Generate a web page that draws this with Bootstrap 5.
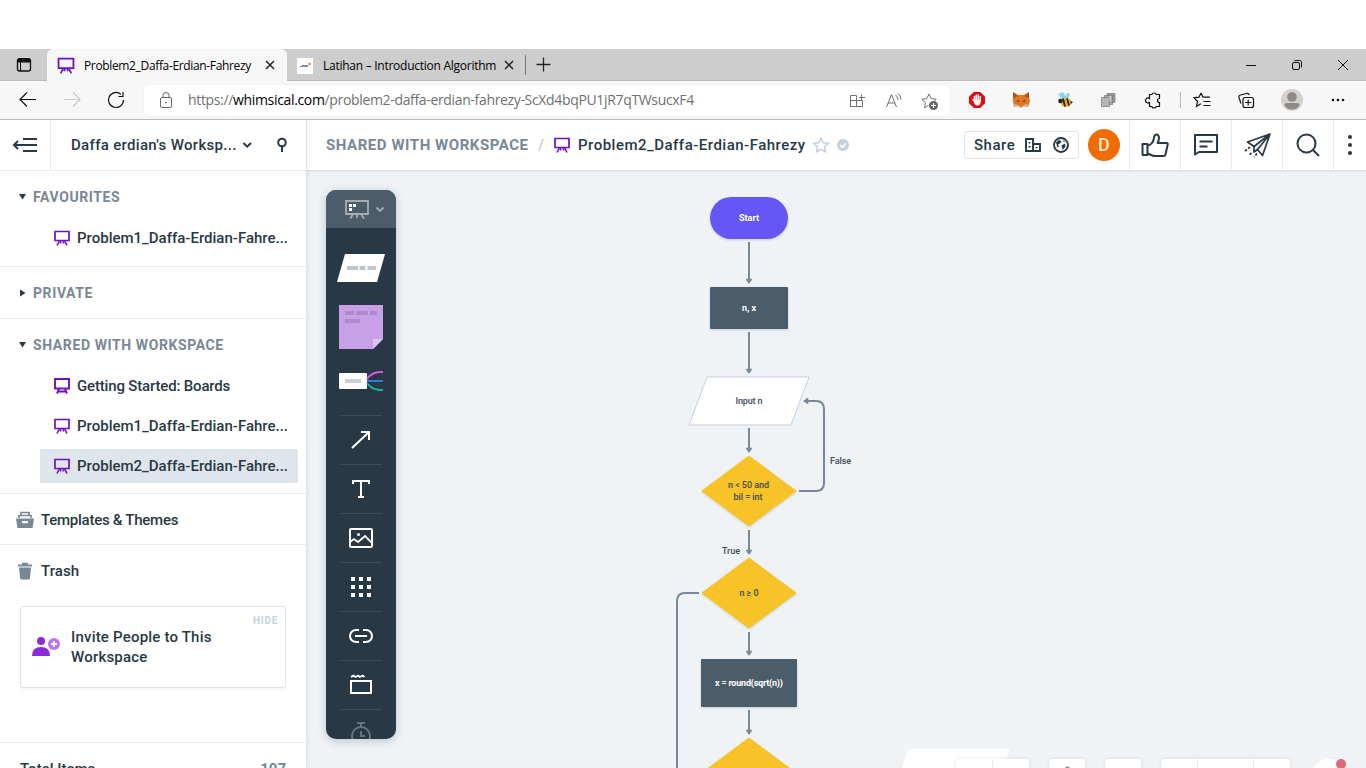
<!DOCTYPE html>
<html lang="en">
<head>
<meta charset="utf-8">
<meta name="viewport" content="width=device-width, initial-scale=1">
<title>Problem2_Daffa-Erdian-Fahrezy</title>
<link href="https://cdn.jsdelivr.net/npm/bootstrap@5.3.0/dist/css/bootstrap.min.css" rel="stylesheet">
<style>
:root{--ink:#283845;--slate:#788896;--line:#e9edf3;--violet:#730fc3;--canvas:#eff3f6}
body{height:100vh;overflow:hidden;background:#fff;color:var(--ink);font-family:Roboto,"Liberation Sans",sans-serif;font-weight:500;font-size:15px;line-height:20px;padding-top:49px}
svg{display:block;flex:none}
.ui{font-family:"Open Sans","Noto Sans",sans-serif;font-weight:400;color:#000;white-space:nowrap}
.tabstrip{height:32px;background:#cdcdcd;border-bottom:1px solid #bcbcbc}
.tab-active{width:240px;height:32px;background:#f7f7f7;border-radius:6px 6px 0 0;padding:0 12px 0 10px}
.tab-title{font-size:12px;line-height:31px}
.tab-first{letter-spacing:-.35px;margin-left:9px}
.tab-second{letter-spacing:-.26px}
.addressbar{height:38px;background:#f7f7f7}
.chrome-end{height:1px;background:#b9b9b9}
.urlbox{width:806px;height:31px;background:#fff;border-radius:5px;margin-left:11px;box-shadow:0 0 2px #00000012}
.url{font-size:14px;color:#707070;letter-spacing:-.34px;width:669px;padding-left:16px}
.sidebar{width:307px;border-right:1px solid #dfe4ea;box-shadow:1px 0 3px #28384514;z-index:1}
.topbar{height:51px;border-bottom:1px solid #dde3ea;background:#fff}
.side-top{height:51px;border-bottom:1px solid var(--line)}
.burger{width:51px;height:50px;border-right:1px solid var(--line)}
.workspace{letter-spacing:.32px}
.group{border-bottom:1px solid var(--line)}
.group-label{height:50px;padding:3px 0 0 18px;font-size:14px;font-weight:700;color:var(--slate);letter-spacing:.6px}
.doc{height:34px;margin:0 8px 6px 40px;padding-left:14px;gap:7px;border-radius:2px;white-space:nowrap}
.doc.current{background:#dfe5ed}
.doc-tight{letter-spacing:-.17px}
.link-row{height:51px;padding:2px 0 0 16px;gap:7px;letter-spacing:-.25px}
.bin-row{letter-spacing:.05px}
.invite{width:266px;height:82px;margin:10px 0 0 20px;border:1px solid #dfe5ed;border-radius:2px;box-shadow:0 2px 3px #2838450d;letter-spacing:.2px}
.hide-link{position:absolute;right:7px;top:4px;font-size:10px;font-weight:700;color:#c5d0db;letter-spacing:.7px}
.totals{margin-top:54px;border-top:1px solid var(--line);padding:16px 20px 0}
.total-num{color:var(--slate);font-weight:700}
.crumb{color:var(--slate);font-weight:700;letter-spacing:.55px;font-size:15px;width:203px;margin-left:19px;white-space:nowrap}
.board-name{letter-spacing:.49px;width:227px;white-space:nowrap}
.share{width:115px;height:28px;border:1px solid #dfe5ed;border-radius:3px;padding:0 4px 0 9px;letter-spacing:.5px}
.avatar{width:32px;height:32px;border-radius:50%;background:#f06c00;color:#ffe6cf;font-size:18px;margin:0 9px}
.cell{width:51px;height:50px;border-left:1px solid var(--line)}
.canvas{background:var(--canvas);overflow:hidden}
.diagram text{font-size:9px;fill:#3f4c58;text-anchor:middle}
.diagram .on-dark{fill:#fff;font-weight:700}
.palette{position:absolute;left:19px;top:19px;width:70px;height:549px;border-radius:10px;background:#283845;box-shadow:0 2px 8px #28384540;overflow:hidden}
.dock{position:absolute;left:649px;top:588px;gap:20px;height:36px}
.dock-box{background:#fff;border-radius:4px;box-shadow:0 0 4px #28384520}
.dock-box span{height:36px;border-right:1px solid #e9edf1}
.dock-box span:last-child{border:0}
</style>
</head>
<body class="d-flex flex-column">
<svg width="0" height="0" class="position-absolute">
  <symbol id="board" viewBox="0 0 16 16"><path d="M1 1.500h14v9H1z" fill="none" stroke="currentColor" stroke-width="1.700"/><path d="M5.300 11 3 15.500M10.700 11 13 15.500M7 11.300 6.300 13.500M9 11.300l.7 2.200" fill="none" stroke="currentColor" stroke-width="1.600"/></symbol>
  <symbol id="cross" viewBox="0 0 10 10"><path d="m1 1 8 8M9 1 1 9" stroke="#222" stroke-width="1.500"/></symbol>
</svg>

<div class="tabstrip d-flex align-items-start ui">
  <svg width="47" height="31" viewBox="0 49 47 31"><rect x="17.500" y="59" width="13" height="12" rx="2" fill="none" stroke="#111" stroke-width="1.300"/><path d="M17.500 62v-1.500q0-2 2-2h9q2 0 2 2V62zM20.500 62v9" fill="#111" stroke="#111"/></svg>
  <div class="tab-active d-flex align-items-center">
    <svg width="18" height="17" color="#730fc3"><use href="#board"/></svg>
    <span class="tab-title tab-first">Problem2_Daffa-Erdian-Fahrezy</span>
    <svg width="10" height="10" class="ms-auto"><use href="#cross"/></svg>
  </div>
  <div class="d-flex align-items-center" style="height:32px;width:238px">
    <svg width="36" height="31" viewBox="287 49 36 31"><path d="M297 57h16v16h-16z" fill="#fff"/><path d="M300 65.500h8M302 64.500h6" stroke="#7d86a8"/><circle cx="309.500" cy="63" r="1.300" fill="#f08040"/></svg>
    <span class="tab-title tab-second">Latihan – Introduction Algorithm</span>
    <svg width="21" height="10" viewBox="0 0 21 10" class="ms-auto"><path d="m1 1 8 8M9 1 1 9" stroke="#222" stroke-width="1.500"/></svg>
  </div>
  <svg width="30" height="31" viewBox="525 49 30 31" fill="none" stroke="#222"><path d="M525.500 55v20" stroke="#777"/><path d="M536.500 64.500h14M543.500 57.500v14" stroke-width="1.300"/></svg>
  <svg width="136" height="31" viewBox="1230 49 136 31" class="ms-auto" fill="none" stroke="#111"><path d="M1246 65.500h10M1338 60l10 10M1348 60l-10 10"/><rect x="1292.500" y="62.500" width="7" height="7" rx="1.500"/><path d="M1294.500 60.500h5q2 0 2 2v5"/></svg>
</div>

<div class="addressbar d-flex align-items-center ui">
  <svg width="133" height="38" viewBox="0 81 133 38" fill="none" stroke="#111" stroke-width="1.200"><path d="M20 99.500h16M27 92.500l-7 7 7 7"/><path d="M64 99.500h16M73 92.500l7 7-7 7" stroke="#c9c9c9"/><path d="M123.500 100a7.500 7.500 0 1 1-2.500-5.600M123 92v4.500h-4.500"/></svg>
  <div class="urlbox d-flex align-items-center">
    <svg width="28" height="31" viewBox="144 84 28 31" fill="none" stroke="#666"><rect x="160.500" y="96.500" width="11" height="10" rx="1.500"/><path d="M163 96v-1.500a3 3 0 0 1 6 0V96"/><circle cx="166" cy="101.500" r=".6" fill="#666"/></svg>
    <div class="url"><span>https://</span><span class="text-black">whimsical.com</span><span>/problem2-daffa-erdian-fahrezy-ScXd4bqPU1jR7qTWsucxF4</span></div>
    <svg width="100" height="31" viewBox="841 84 100 31" fill="none" stroke="#707070"><path d="M850.500 94.500h6v11h-6zM850.500 99.500h12v6h-12zM859 96.500h6M861.500 93.500v6"/><path d="m886.500 106 5-12.500 5 12.500M888 102h7M895.500 94q2.500 1.500 2.500 5M898 92.500q3 2 3 6"/><path d="m929 93 2.200 4.600 5 .6-2.500 2.500M929 93l-2.200 4.600-5 .7 3.700 3.500-1 5 4-2.300"/><circle cx="933.500" cy="104.500" r="4.500" fill="#666" stroke="none"/><path d="M931 104.500h5M933.500 102v5" stroke="#fff"/></svg>
  </div>
  <svg width="416" height="38" viewBox="950 81 416 38" fill="none" stroke="#111">
    <path d="M973.800 92h6.400l4.800 4.700v6.600l-4.800 4.700h-6.400l-4.800-4.700v-6.600z" fill="#e5080e" stroke="none"/><path d="M973 99.500l1.500 2v-5M976.300 101v-6M978.300 101v-6M980.300 101v-4.500" stroke="#fff" stroke-width="1.500" stroke-linecap="round"/><path d="M973.500 100h7.500q0 5.500-3.500 5.500t-4-5.500z" fill="#fff" stroke="none"/>
    <g stroke="none"><path d="m1013 92 5 3h6l5-3v5l1 4-2 6-5-1-2 2-2-2-5 1-1-6 0-3z" fill="#e27520"/><path d="m1013 92 5 4-5 2zm16 0-5 4 5 2z" fill="#a4561f"/><path d="m1014 104 4 1 1 2h4l1-2 4-1-1 3-4 0-2 1-2-1-4 0z" fill="#d5bfb0"/><path d="m1017 100 3 1.500h-3zm8 0-3 1.500h3z" fill="#233447"/></g>
    <g stroke="none"><path d="m1058 94 5-2 4 6-5 1zm9-1 3 1-2 5-3-1z" fill="#8bd3f5"/><ellipse cx="1066" cy="102.500" rx="5.500" ry="4.500" fill="#f4b21f"/><path d="m1063 98.500 2 8M1067 98.500l2 7" stroke="#222" stroke-width="1.800"/><circle cx="1060.500" cy="101" r="2.300" fill="#222"/><path d="m1070 101 3 1-2 2z" fill="#222"/></g>
    <g fill="#999" stroke="#777" stroke-width=".7"><path d="M1107 93.500h8v9h-8z"/><path d="M1104.500 95.500h8v9h-8z" fill="#aaa"/><path d="M1101.500 97.500h8v9h-8z" fill="#b5b5b5"/><path d="M1110 96v5" stroke="#fff"/></g>
    <path d="M1149.500 94.500h2.200a2.500 2.500 0 0 1 4.600 0h3.200v4a2 2 0 0 0 0 4v4h-3.200a2.500 2.500 0 0 1-4.600 0H1149.500v-4a2.500 2.500 0 1 1 0-4z" stroke-width="1.200"/>
    <path d="M1180.500 92v16" stroke="#bbb"/>
    <path d="m1201 94 2 4.200h7M1201 94l-2 4.200-5 .6 3.500 3.500-1 5 4.500-2.500M1203.500 102.500h7M1203.500 106.500h7" transform="translate(0 -1)" stroke-width="1.200"/>
    <rect x="1243" y="97.500" width="10.500" height="10" rx="2" stroke-width="1.200"/><path d="M1248.200 99.500v6M1245.200 102.500h6M1241 103.500l-2-6q-.5-2 1.500-2.500l6-1.500q2-.5 3 1.500" stroke-width="1.200"/>
    <circle cx="1292" cy="100" r="11" fill="#d4d2cf" stroke="none"/><circle cx="1292" cy="97" r="4.800" fill="#8f8a86" stroke="none"/><path d="M1284.500 105q0-2 2.500-2h10q2.500 0 2.500 2-2 4.500-7.500 4.500t-7.500-4.500z" fill="#8f8a86" stroke="none"/>
    <g fill="#111" stroke="none"><circle cx="1333" cy="100" r="1.300"/><circle cx="1338" cy="100" r="1.300"/><circle cx="1343" cy="100" r="1.300"/></g>
  </svg>
</div>
<div class="chrome-end"></div>

<div class="d-flex flex-grow-1 overflow-hidden">
  <aside class="sidebar flex-shrink-0 bg-white position-relative">
    <div class="side-top d-flex align-items-center">
      <div class="burger flex-shrink-0"><svg width="50" height="50" viewBox="0 120 50 50" fill="none" stroke="#283845" stroke-width="2"><path d="M23 139h14M15 145h22M23 151h14M18 141l-4 4 4 4"/></svg></div>
      <span class="workspace ps-3 ms-1 text-nowrap">Daffa erdian's Worksp...</span>
      <svg width="66" height="50" viewBox="240 120 66 50" fill="none" stroke="#283845" stroke-width="2" class="ms-auto"><path d="m243.500 143 3.700 3.700 3.700-3.700"/><circle cx="282" cy="142.500" r="3.800"/><path d="M282 146v6"/></svg>
    </div>
    <section class="group pb-1" style="height:96px">
      <div class="group-label d-flex align-items-center"><svg width="15" height="10"><path d="M1 2h7L4.500 7.500z" fill="#283845"/></svg>FAVOURITES</div>
      <div class="doc d-flex align-items-center"><svg width="16" height="16" color="#730fc3"><use href="#board"/></svg>Problem1_Daffa-Erdian-Fahre...</div>
    </section>
    <section class="group" style="height:52px">
      <div class="group-label d-flex align-items-center"><svg width="15" height="10"><path d="M2 1.500v7L7.500 5z" fill="#283845"/></svg>PRIVATE</div>
    </section>
    <section class="group" style="height:175px">
      <div class="group-label d-flex align-items-center"><svg width="15" height="10"><path d="M1 2h7L4.500 7.500z" fill="#283845"/></svg>SHARED WITH WORKSPACE</div>
      <div class="doc doc-tight d-flex align-items-center"><svg width="16" height="16" viewBox="0 0 16 16" fill="none" stroke="#730fc3"><path d="M1 1h14v9.500H1z" stroke-width="1.900"/><path d="m5 11-2 4.500M11 11l2 4.500M4 13.500h8" stroke-width="1.900"/></svg>Getting Started: Boards</div>
      <div class="doc d-flex align-items-center"><svg width="16" height="16" color="#730fc3"><use href="#board"/></svg>Problem1_Daffa-Erdian-Fahre...</div>
      <div class="doc current d-flex align-items-center"><svg width="16" height="16" color="#730fc3"><use href="#board"/></svg>Problem2_Daffa-Erdian-Fahre...</div>
    </section>
    <div class="link-row group d-flex align-items-center"><svg width="18" height="18" viewBox="0 0 18 18"><path d="M5 4V1.500h8V4M3 7V4.500h12V7" fill="none" stroke="#788896" stroke-width="1.700"/><path d="M0 7.500h18L16.500 17H1.500zM6 10v2.200h6V10z" fill="#788896" fill-rule="evenodd"/></svg>Templates &amp; Themes</div>
    <div class="link-row bin-row d-flex align-items-center"><svg width="18" height="18" viewBox="0 0 18 18" fill="#788896"><path d="M2 2.500h4V.800h6v1.700h4v2H2zM3 5.500h12l-1 10.500q-.2 1.500-1.500 1.500h-7Q4.200 17.500 4 16z"/></svg>Trash</div>
    <div class="invite position-relative d-flex align-items-center">
      <svg width="50" height="50" viewBox="21 622 50 50"><circle cx="41" cy="641" r="4" fill="#8c2bdb"/><path d="M32 656q0-9 9-9t9 9z" fill="#8c2bdb"/><circle cx="54" cy="644" r="6" fill="#bb77ef"/><path d="M51 644h6M54 641v6" stroke="#fff" stroke-width="1.800"/></svg>
      <span>Invite People to This<br>Workspace</span>
      <span class="hide-link">HIDE</span>
    </div>
    <div class="totals d-flex justify-content-between"><span>Total Items</span><span class="total-num">107</span></div>
  </aside>

  <main class="flex-grow-1 d-flex flex-column">
    <header class="topbar d-flex align-items-center">
      <span class="crumb">SHARED WITH WORKSPACE</span>
      <svg width="49" height="50" viewBox="529 120 49 50"><path d="m539 151 4-12" stroke="#c5d0db" stroke-width="1.500"/><svg x="554" y="137" width="16" height="16" color="#730fc3"><use href="#board"/></svg></svg>
      <span class="board-name">Problem2_Daffa-Erdian-Fahrezy</span>
      <svg width="48" height="50" viewBox="805 120 48 50"><path d="m821 138 2.200 4.700 5.100.6-3.800 3.500 1 5-4.500-2.500-4.500 2.500 1-5-3.800-3.500 5.100-.6z" fill="none" stroke="#c5d0db" stroke-width="1.500"/><circle cx="843" cy="145" r="6" fill="#c5d0db"/><path d="m840 145 2.300 2.300 3.700-4" fill="none" stroke="#fff" stroke-width="1.700"/></svg>
      <div class="share ms-auto d-flex align-items-center">Share
        <svg width="58" height="26" viewBox="1016 132 58 26" class="ms-auto" fill="none" stroke="#283845" stroke-width="1.900"><path d="M1026 139h7v12h-7zM1033 144h7v7h-7z"/><path d="M1029.500 142v1.500M1029.500 146v1.500M1036.500 147v1.200"/><circle cx="1061" cy="145" r="7"/><path d="m1056 142.500 3-2.500 2.500 1-1.500 2.500-2 1 1 2-1.500 1zM1061.500 145.500l3.500-2 .5 3-3 3.500zM1063 140l2 1.500-1 1z" fill="#283845" stroke="none"/></svg></div>
      <div class="avatar d-flex align-items-center justify-content-center">D</div>
      <div class="cell"><svg width="50" height="50" viewBox="1128.500 120 50 50" fill="none" stroke="#283845" stroke-width="2" stroke-linejoin="round"><path d="M1141 144h5v11h-5zM1146 146q6-2 6.500-8.500.5-3 2.500-3t2.500 3q0 3-1.500 5.500h9q1.500 0 1.200 1.500l-2.200 10q-.3 1.500-1.800 1.500h-10l-6-2.500"/></svg></div>
      <div class="cell"><svg width="50" height="50" viewBox="1179.500 120 50 50" fill="none" stroke="#283845" stroke-width="2" stroke-linejoin="round"><path d="M1193.500 135h22v17h-18l-4 2.500z"/><path d="M1198 141.500h13M1198 146.500h8"/></svg></div>
      <div class="cell"><svg width="50" height="50" viewBox="1231 120 50 50" fill="none" stroke="#283845" stroke-width="1.700" stroke-linejoin="round"><path d="m1269 134-22.500 8 6.500 4.500v5.500l3.500-2.500 5 6zM1269 134l-16 12.500M1269 134l-12.500 15.500"/><path d="M1249 147l-5 4M1250.500 153l-2.500 2M1256 153.500l-3 3.500" stroke-dasharray="2.500 1.500"/></svg></div>
      <div class="cell"><svg width="50" height="50" viewBox="1282 120 50 50" fill="none" stroke="#283845" stroke-width="2"><circle cx="1305.500" cy="143.500" r="9"/><path d="m1312 150 6 6"/></svg></div>
      <div class="cell" style="width:33px"><svg width="32" height="50" viewBox="1334 120 32 50" fill="#283845"><circle cx="1350" cy="137" r="2"/><circle cx="1350" cy="145" r="2"/><circle cx="1350" cy="153" r="2"/></svg></div>
    </header>

    <div class="canvas flex-grow-1 position-relative">
      <svg class="diagram" width="1059" height="597" viewBox="307 171 1059 597">
        <defs>
          <marker id="tip" viewBox="0 0 6 6" refX="3" refY="3" markerWidth="6" markerHeight="6" markerUnits="userSpaceOnUse" orient="auto"><path d="M1.200 .200v5.600L5.300 3z" fill="#788896" stroke="#788896" stroke-linejoin="round"/></marker>
          <filter id="soft" x="-10%" y="-10%" width="120%" height="130%"><feDropShadow dx="0" dy="1" stdDeviation="1" flood-color="#283845" flood-opacity=".2"/></filter>
        </defs>
        <path d="M307 171.500h1059" stroke="#e2e8ee"/>
        <g fill="none" stroke="#788896" stroke-width="2">
          <g marker-end="url(#tip)"><path d="M749 242v39"/><path d="M749 332v39"/><path d="M749 428v22"/><path d="M749 530v22"/><path d="M749 632v21"/><path d="M749 710v22"/><path d="M799 491h17q8 0 8-8v-74q0-8-8-8h-10"/></g>
          <path d="M699 593h-14q-8 0-8 8v170"/>
        </g>
        <g filter="url(#soft)">
          <rect x="710" y="197" width="78" height="42" rx="21" fill="#6557f5"/>
          <rect x="710" y="287" width="78" height="42" rx="1" fill="#4b5c6b"/>
          <rect x="701" y="659" width="96" height="48" rx="1" fill="#4b5c6b"/>
          <g fill="#f7c325" stroke="#f7c325" stroke-linejoin="round"><path d="m749 456 47 35-47 35-47-35z"/><path d="m749 558 47 35-47 35-47-35z"/><path d="m749 738 47 35-47 35-47-35z"/></g>
        </g>
        <path d="M707 377h102l-18 48H689z" fill="#fff" stroke="#c5d0db" stroke-linejoin="round"/>
        <path d="M908.500 749H1010l-8 22H900z" fill="#fff"/>
        <text x="749" y="221" textLength="20" class="on-dark">Start</text>
        <text x="749" y="311" textLength="14" class="on-dark">n, x</text>
        <text x="749" y="404" textLength="27">Input n</text>
        <text x="748.500" y="488" textLength="41">n &lt; 50 and</text>
        <text x="748" y="500" textLength="29">bil = int</text>
        <text x="749" y="596" textLength="19">n ≥ 0</text>
        <text x="749" y="686" textLength="68" class="on-dark">x = round(sqrt(n))</text>
        <text x="840.500" y="464" textLength="21">False</text>
        <text x="731" y="554" textLength="18">True</text>
      </svg>

      <div class="palette">
        <svg width="70" height="549" viewBox="326 190 70 549" fill="none">
          <path d="M326 190h70v38h-70z" fill="#4b5c6b"/>
          <g stroke="#a5aeb5" stroke-width="1.800"><path d="M346 201h22v13h-22zM352.500 215l-2 3.500M357 215v3M361.500 215l2.500 3.500"/><path d="m376.500 207.500 3.500 3.500 3.500-3.500"/></g><path d="M349 204h3v3h-3zM353 204h3v3h-3zM349 208h3v3h-3z" fill="#fff"/>
          <g filter="url(#soft)"><path d="M345 254h40l-8 28h-40z" fill="#fff"/><path d="M339 305h44v34l-10 10h-34z" fill="#c7a0e8"/><rect x="339" y="373" width="28" height="16" rx="1" fill="#fff"/></g>
          <path d="M347 268h11M359.500 268h6M367.500 268h8.500" stroke="#bfc4c9" stroke-width="4"/>
          <path d="M373 339h10l-10 10z" fill="#dcc4f2"/><path d="M345 313h9M356 313h12M370 313h7M345 321h15" stroke="#ad8bca" stroke-width="4"/>
          <path d="M345 381h16" stroke="#c5d0db" stroke-width="4"/>
          <path d="M367 379q4-6 12-7h4" stroke="#d357d8" stroke-width="1.800"/><path d="M367 381h16" stroke="#2b8be2" stroke-width="1.800"/><path d="M367 383q4 6 12 7h4" stroke="#12b5a0" stroke-width="1.800"/>
          <path d="M340 415.500h42M340 464.500h42M340 513.500h42M340 562.500h42M340 611.500h42M340 660.500h42M340 709.500h42" stroke="#3c4c59"/>
          <g stroke="#fff" stroke-width="2"><path d="m352 448 17-16M361 432h8v8"/><path d="M353 484v-3h16v3M361 481v16M358 497h6"/><rect x="350" y="529" width="22" height="18" rx="1"/><path d="m350 542 4-3 4 3 7-6 7 7" stroke-width="1.800"/><circle cx="358.500" cy="534.500" r="1.500" fill="#fff" stroke="none"/><path d="M359 630h-3a6 6 0 0 0 0 12h3M363 630h3a6 6 0 0 1 0 12h-3M355 636h12"/><path d="M351 681h20v12h-20z"/><path d="m351 677 2.500-1.500 2 1.500 2.500-1.500 2 1.500 2.500-1.500 2 1.500" stroke-width="1.800"/></g>
          <g fill="#fff"><path d="M351 577h4v4h-4zM359 577h4v4h-4zM367 577h4v4h-4zM351 585h4v4h-4zM359 585h4v4h-4zM367 585h4v4h-4zM351 593h4v4h-4zM359 593h4v4h-4zM367 593h4v4h-4z"/></g>
          <g stroke="#67747f" stroke-width="2"><circle cx="361" cy="736" r="9"/><path d="M357 723h8M361 723v4M361 731v5h4"/></g>
        </svg>
      </div>

      <div class="dock d-flex">
        <div class="dock-box d-flex"><span style="width:37px"></span><span style="width:36px"></span></div>
        <div class="dock-box"><svg width="36" height="36"><circle cx="18.500" cy="10" r="2.500" fill="#788896"/></svg></div>
        <div class="dock-box" style="width:36px"></div>
        <div class="dock-box d-flex"><span style="width:37px"></span><span style="width:56px"></span><span style="width:36px"></span></div>
        <svg width="50" height="36" viewBox="1310 759 50 36"><circle cx="1329" cy="778" r="19" fill="#fff"/><circle cx="1341" cy="764" r="5" fill="#e0667a"/></svg>
      </div>
    </div>
  </main>
</div>
<script src="https://cdn.jsdelivr.net/npm/bootstrap@5.3.0/dist/js/bootstrap.bundle.min.js"></script>
</body>
</html>
